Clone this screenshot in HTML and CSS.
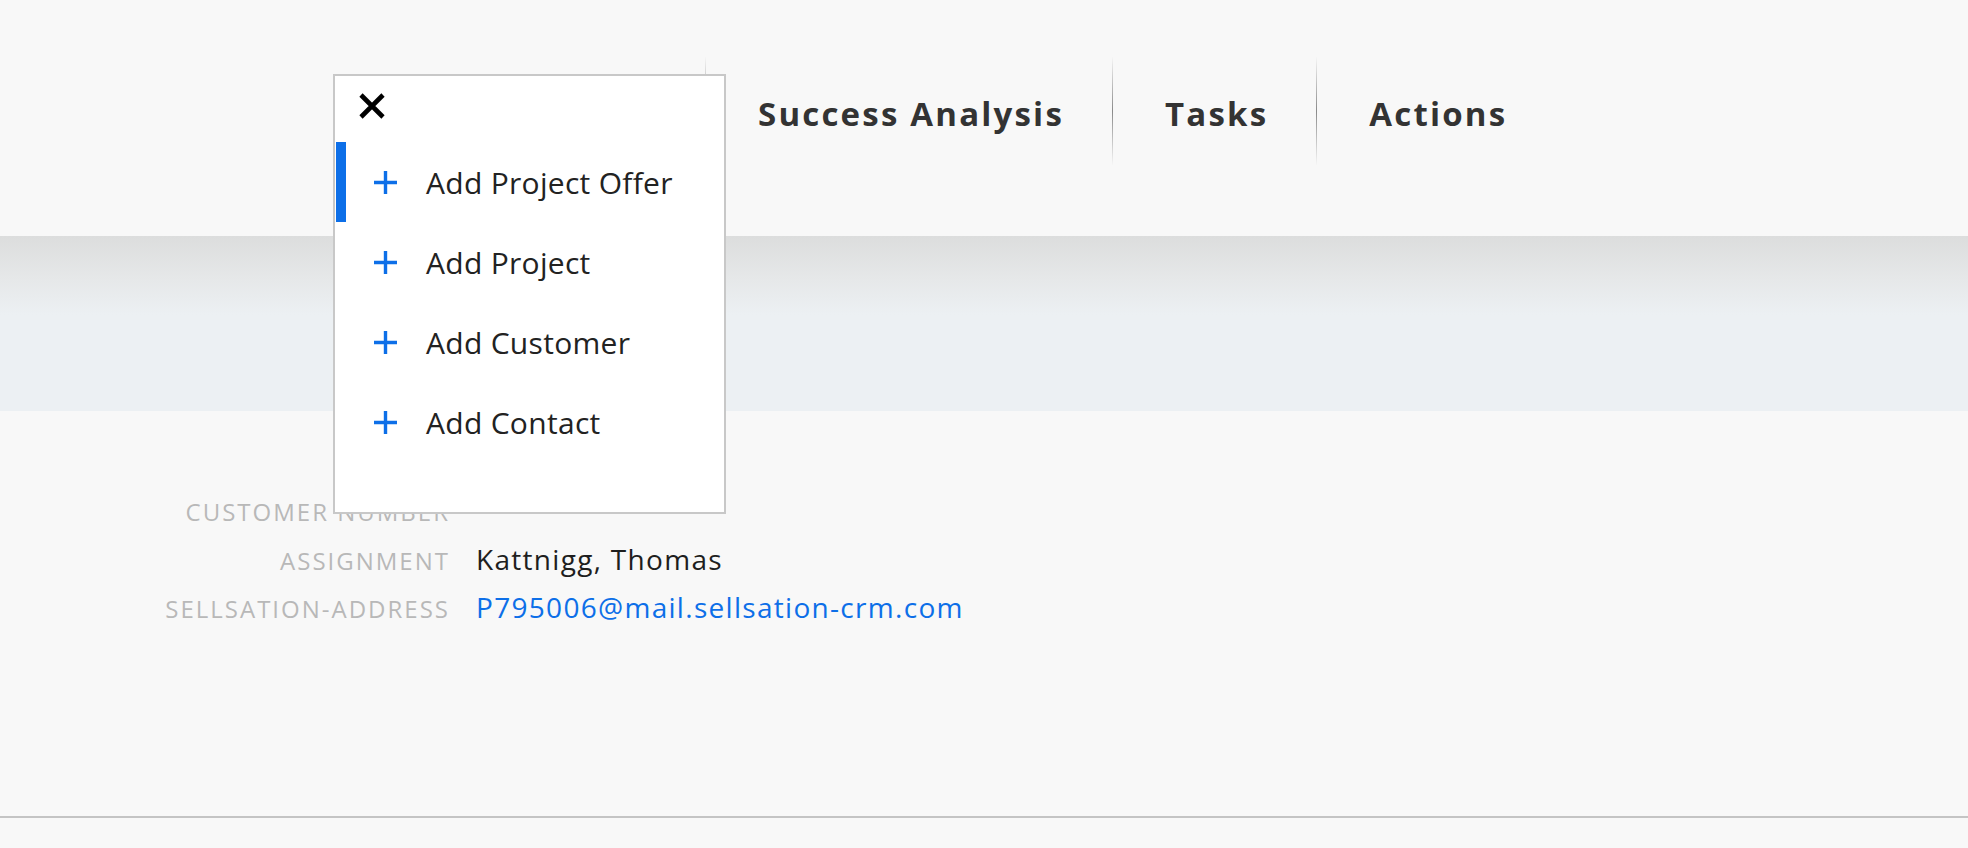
FILE: index.html
```html
<!DOCTYPE html>
<html lang="en">
<head>
<meta charset="utf-8">
<title>Sellsation CRM</title>
<link rel="stylesheet" href="styles.css">
</head>
<body>
<header class="topbar">
  <nav class="mainnav">
    <a class="navitem" href="#">Success Analysis</a>
    <a class="navitem" href="#">Tasks</a>
    <a class="navitem" href="#">Actions</a>
  </nav>
</header>
<div class="band"></div>
<main class="content">
  <div class="details">
    <span class="label">Customer Number</span><span class="value">&nbsp;</span>
    <span class="label">Assignment</span><span class="value">Kattnigg, Thomas</span>
    <span class="label">Sellsation-Address</span><a class="value link" href="#">P795006@mail.sellsation-crm.com</a>
  </div>
</main>
<footer class="footer"></footer>

<div class="popup">
  <button class="close" aria-label="Close">
    <svg width="26" height="26" viewBox="0 0 26 26"><path d="M2 2 L24 24 M24 2 L2 24" stroke="#000" stroke-width="4.6" fill="none"/></svg>
  </button>
  <ul class="menu">
    <li class="menuitem active"><svg class="plus" width="25" height="25" viewBox="0 0 25 25"><path d="M12.5 1 V24 M1 12.5 H24" stroke="#0d6fe8" stroke-width="3.4" fill="none"/></svg><span>Add Project Offer</span></li>
    <li class="menuitem"><svg class="plus" width="25" height="25" viewBox="0 0 25 25"><path d="M12.5 1 V24 M1 12.5 H24" stroke="#0d6fe8" stroke-width="3.4" fill="none"/></svg><span>Add Project</span></li>
    <li class="menuitem"><svg class="plus" width="25" height="25" viewBox="0 0 25 25"><path d="M12.5 1 V24 M1 12.5 H24" stroke="#0d6fe8" stroke-width="3.4" fill="none"/></svg><span>Add Customer</span></li>
    <li class="menuitem"><svg class="plus" width="25" height="25" viewBox="0 0 25 25"><path d="M12.5 1 V24 M1 12.5 H24" stroke="#0d6fe8" stroke-width="3.4" fill="none"/></svg><span>Add Contact</span></li>
  </ul>
</div>
</body>
</html>
```
FILE: styles.css
```css
* { box-sizing: border-box; }
html, body { margin: 0; padding: 0; }
body {
  background: #f8f8f8;
  font-family: "Open Sans", "Liberation Sans", sans-serif;
  color: #1e1e1e;
  position: relative;
  height: 848px;
  overflow: hidden;
}

.topbar {
  height: 236px;
  background: #f8f8f8;
}
.mainnav {
  display: flex;
  padding-left: 705px;
  padding-top: 57px;
}
.navitem {
  display: flex;
  align-items: center;
  height: 108px;
  padding: 5px 48px 0 52px;
  border-left: 1px solid #999;
  border-image: linear-gradient(to bottom, rgba(150,150,150,0), #8a8a8a 50%, rgba(150,150,150,0)) 1;
  font-size: 33px;
  font-weight: 700;
  letter-spacing: 2.2px;
  color: #333;
  text-decoration: none;
}

.band {
  height: 175px;
  background: linear-gradient(to bottom, #dcdddd 0%, #e6e8e9 25%, #ecf0f3 45%, #ecf0f3 100%);
}

.content {
  height: 405px;
  padding-top: 76px;
}
.details {
  display: grid;
  grid-template-columns: 450px auto;
  column-gap: 26px;
  align-items: baseline;
}
.label {
  text-align: right;
  text-transform: uppercase;
  font-size: 24px;
  letter-spacing: 2px;
  line-height: 47.5px;
  color: #b8b8b8;
}
.value {
  font-size: 28px;
  letter-spacing: 1.3px;
  line-height: 47.5px;
  color: #1e1e1e;
}
.link {
  color: #0d6fe8;
  text-decoration: none;
  justify-self: start;
}

.footer {
  border-top: 2px solid #c4c4c4;
  height: 32px;
  background: #f8f8f8;
}

.popup {
  position: absolute;
  left: 333px;
  top: 74px;
  width: 393px;
  height: 440px;
  background: #fff;
  border: 2px solid #c8c8c8;
}
.close {
  display: block;
  margin: 17px 0 0 24px;
  padding: 0;
  border: 0;
  background: none;
  width: 26px;
  height: 26px;
  cursor: pointer;
}
.close svg { display: block; }
.menu {
  list-style: none;
  margin: 23px 0 0 0;
  padding: 0;
}
.menuitem {
  display: flex;
  align-items: center;
  height: 80px;
  margin-left: 1px;
  border-left: 10px solid transparent;
  padding-left: 27px;
  font-size: 30px;
  letter-spacing: 0.3px;
  color: #222;
}
.menuitem.active { border-left-color: #0d6fe8; }
.plus { flex: none; margin-right: 28px; display: block; }
```
